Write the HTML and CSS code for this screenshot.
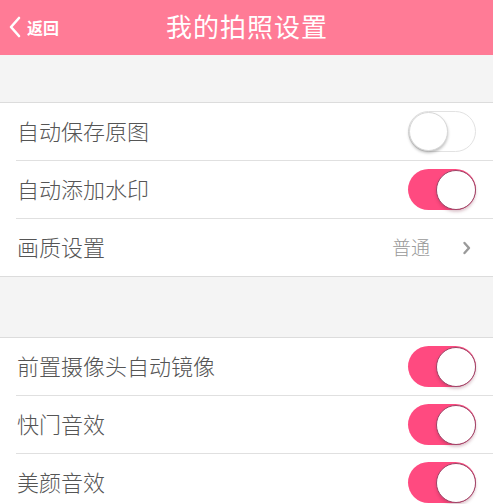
FILE: index.html
```html
<!DOCTYPE html>
<html lang="zh-CN">
<head>
<meta charset="utf-8">
<title>我的拍照设置</title>
<link rel="stylesheet" href="styles.css">
</head>
<body>
<header class="nav">
  <div class="back">
    <svg class="back-icon" width="14" height="22" viewBox="0 0 14 22"><path d="M11 2 L3 11 L11 20" fill="none" stroke="#fff" stroke-width="2.6" stroke-linecap="round" stroke-linejoin="round"/></svg>
    <span class="back-text">返回</span>
  </div>
  <h1 class="title">我的拍照设置</h1>
</header>
<div class="spacer first"></div>
<section class="group">
  <div class="row"><span class="label">自动保存原图</span><span class="switch off"><span class="knob"></span></span></div>
  <div class="row"><span class="label">自动添加水印</span><span class="switch on"><span class="knob"></span></span></div>
  <div class="row"><span class="label">画质设置</span><span class="detail"><span class="value">普通</span><svg class="chev" width="10" height="16" viewBox="0 0 10 16"><path d="M2.5 3 L7 8 L2.5 13" fill="none" stroke="#9a9a9a" stroke-width="2.4" stroke-linecap="round" stroke-linejoin="round"/></svg></span></div>
</section>
<div class="spacer second"></div>
<section class="group">
  <div class="row"><span class="label">前置摄像头自动镜像</span><span class="switch on"><span class="knob"></span></span></div>
  <div class="row"><span class="label">快门音效</span><span class="switch on"><span class="knob"></span></span></div>
  <div class="row"><span class="label">美颜音效</span><span class="switch on"><span class="knob"></span></span></div>
</section>
</body>
</html>
```
FILE: styles.css
```css
* { box-sizing: border-box; }
html, body { margin: 0; padding: 0; }
body {
  width: 493px;
  height: 504px;
  overflow: hidden;
  background: #f4f4f4;
  font-family: "Noto Sans CJK SC", "Noto Sans", sans-serif;
}
.nav {
  height: 55px;
  background: #ff7b96;
  display: flex;
  align-items: center;
  justify-content: center;
  position: relative;
}
.back {
  position: absolute;
  left: 8px;
  top: 16px;
  display: flex;
  align-items: center;
  gap: 5px;
  color: #fff;
}
.back-text {
  font-size: 16px;
  font-weight: 700;
  line-height: 22px;
}
.title {
  margin: 0 0 3px;
  color: #fff;
  font-size: 26px;
  font-weight: 400;
  letter-spacing: 1px;
  line-height: 52px;
  padding-left: 1px;
}
.spacer.first { height: 47px; }
.spacer.second { height: 60px; }
.group {
  background: #fff;
  border-top: 1px solid #dcdcdc;
  border-bottom: 1px solid #dcdcdc;
}
.row {
  height: 58px;
  margin-left: 16px;
  padding-right: 17px;
  display: flex;
  align-items: center;
  justify-content: space-between;
  border-bottom: 1px solid #e0e0e0;
}
.row:last-child { border-bottom: none; height: 57px; }
.label {
  font-size: 22px;
  font-weight: 300;
  color: #555;
  padding-left: 1px;
  margin-bottom: 3px;
}
.detail {
  display: flex;
  align-items: center;
  gap: 32px;
  padding-right: 4px;
}
.value {
  font-size: 19px;
  font-weight: 300;
  color: #999;
  margin-bottom: 2px;
}
.switch {
  width: 68px;
  height: 41px;
  border-radius: 21px;
  position: relative;
  display: block;
}
.switch.off {
  background: #fff;
  border: 1px solid #e2e2e2;
}
.switch.on {
  background: #ff4a80;
}
.knob {
  position: absolute;
  top: 0;
  width: 40px;
  height: 40px;
  border-radius: 50%;
  background: #fff;
}
.switch.off .knob {
  left: 0;
  top: 0;
  width: 39px;
  height: 39px;
  box-shadow: 0 2px 3px rgba(0,0,0,0.25);
  border: 1px solid #d8d8d8;
}
.switch.on .knob {
  right: 0;
  top: 0.5px;
  border: 1.5px solid #9c4466;
  box-shadow: 0 2px 3px rgba(120,30,60,0.25);
}
```
